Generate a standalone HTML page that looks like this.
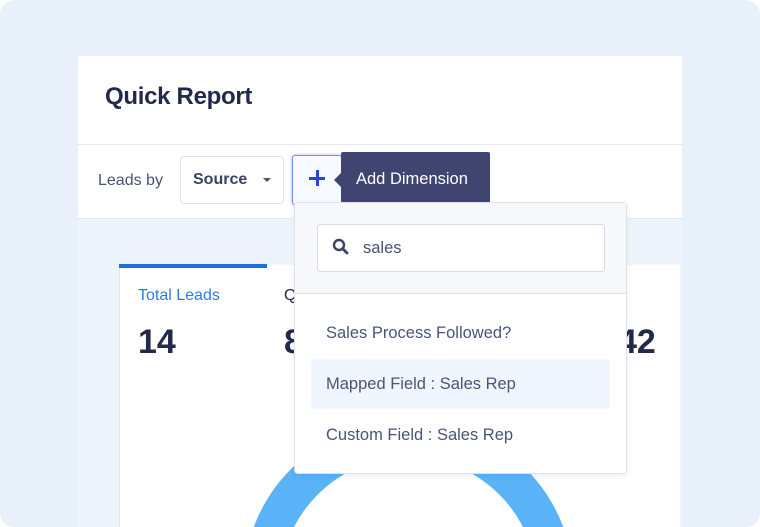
<!DOCTYPE html><html><head><style>
body{margin:0;width:760px;height:527px;overflow:hidden;background:#fff;font-family:"Liberation Sans",sans-serif}
.bg{position:absolute;left:0;top:0;width:760px;height:527px;background:#e8f0fa;border-radius:14px}
.panel{position:absolute;left:78px;top:56px;width:604px;height:471px;background:#fff;overflow:hidden}
.abs{position:absolute}
</style></head><body>
<div class="bg"></div>
<div class="panel">
 <div class="abs" style="left:27px;top:27px;font-size:24px;font-weight:bold;color:#23294a;letter-spacing:-0.3px">Quick Report</div>
 <div class="abs" style="left:0;top:88px;width:604px;height:1px;background:#e3e8f0"></div>
 <div class="abs" style="left:20px;top:116px;font-size:16px;color:#4a5270">Leads by</div>
 <div class="abs" style="left:102px;top:100px;width:102px;height:46px;border:1px solid #dfe4ec;border-radius:4px"></div>
 <div class="abs" style="left:115px;top:115px;font-size:16px;font-weight:bold;color:#3b4262">Source</div>
 <div class="abs" style="left:185px;top:122px;width:0;height:0;border-left:4px solid transparent;border-right:4px solid transparent;border-top:4px solid #4a5270"></div>
 <div class="abs" style="left:214px;top:99px;width:48px;height:48px;border:1px solid #7d8cf0;border-radius:3px;background:#f6f9fe;box-shadow:0 0 3px #9aa8f5"></div>
 <div class="abs" style="left:231px;top:121px;width:16px;height:3px;background:#2a43d6"></div>
 <div class="abs" style="left:238px;top:114px;width:3px;height:16px;background:#2a43d6"></div>
 <div class="abs" style="left:263px;top:96px;width:149px;height:51px;background:#3f4570;border-radius:2px"></div>
 <div class="abs" style="left:256px;top:117px;width:0;height:0;border-top:7px solid transparent;border-bottom:7px solid transparent;border-right:7px solid #3f4570"></div>
 <div class="abs" style="left:278px;top:114px;font-size:16.5px;color:#fff">Add Dimension</div>
 <div class="abs" style="left:0;top:162px;width:604px;height:309px;background:#eef4fc;border-top:1px solid #e3e8f0"></div>
 <div class="abs" style="left:41px;top:209px;width:560px;height:262px;background:#fff;border-left:1px solid #dfe6f0;overflow:hidden">
  <div class="abs" style="left:123px;top:155px;width:257px;height:257px;border-radius:50%;border:37.5px solid #5ab2f7"></div>
 </div>
 <div class="abs" style="left:41px;top:208px;width:148px;height:4px;background:#1f6ee0"></div>
 <div class="abs" style="left:60px;top:231px;font-size:16px;color:#2f7be6">Total Leads</div>
 <div class="abs" style="left:206px;top:231px;font-size:16px;color:#23294a">Q</div>
 <div class="abs" style="left:60px;top:267px;font-size:34px;font-weight:bold;color:#23294a">14</div>
 <div class="abs" style="left:206px;top:267px;font-size:34px;font-weight:bold;color:#23294a">8</div>
 <div class="abs" style="left:540px;top:267px;font-size:34px;font-weight:bold;color:#23294a">42</div>
 <div class="abs" style="left:216px;top:146px;width:331px;height:270px;background:#fff;border:1px solid #dde3ec;border-radius:4px;box-shadow:0 2px 6px rgba(40,60,100,.08)"></div>
 <div class="abs" style="left:217px;top:147px;width:331px;height:90px;background:#f6f8fc;border-bottom:1px solid #dde3ec"></div>
 <div class="abs" style="left:239px;top:168px;width:286px;height:46px;background:#fff;border:1px solid #d5dbe6;border-radius:3px"></div>
 <svg class="abs" style="left:254px;top:182px" width="18" height="18" viewBox="0 0 18 18"><circle cx="7" cy="7" r="5" fill="none" stroke="#3b4262" stroke-width="2.4"/><path d="M11 11L15 15" stroke="#3b4262" stroke-width="2.8" stroke-linecap="round"/></svg>
 <div class="abs" style="left:285px;top:183px;font-size:16.5px;color:#4a5270">sales</div>
 <div class="abs" style="left:248px;top:268px;font-size:16.5px;color:#4a5478">Sales Process Followed?</div>
 <div class="abs" style="left:233px;top:303px;width:299px;height:50px;background:#f1f6fe;border-radius:3px"></div>
 <div class="abs" style="left:248px;top:319px;font-size:16.5px;color:#4a5478">Mapped Field : Sales Rep</div>
 <div class="abs" style="left:248px;top:370px;font-size:16.5px;color:#4a5478">Custom Field : Sales Rep</div>
</div>
</body></html>
